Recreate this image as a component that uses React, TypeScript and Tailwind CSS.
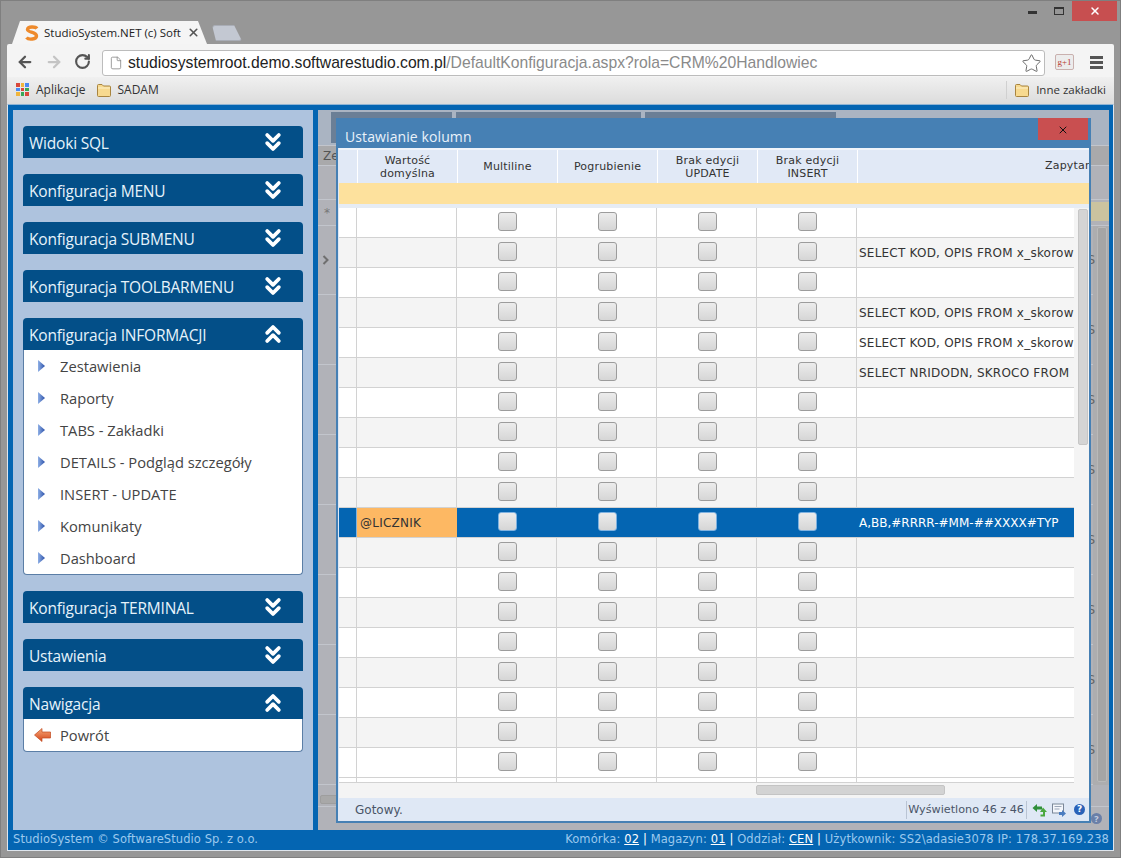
import { ArrowLeft, ArrowRight, RotateCw, Star, File, ChevronsDown, ChevronsUp, X } from 'lucide-react'

const uiFont = "font-['Open_Sans',sans-serif]"
const gridFont = "font-['DejaVu_Sans',sans-serif]"

const ROW_COUNT = 19
const SELECTED_ROW = 10

// query column values by row index
const queries: Record<number, string> = {
  1: 'SELECT KOD, OPIS FROM x_skorow',
  3: 'SELECT KOD, OPIS FROM x_skorow',
  4: 'SELECT KOD, OPIS FROM x_skorow',
  5: 'SELECT NRIDODN, SKROCO FROM',
  10: 'A,BB,#RRRR-#MM-##XXXX#TYP',
}

const infoItems = ['Zestawienia', 'Raporty', 'TABS - Zakładki', 'DETAILS - Podgląd szczegóły', 'INSERT - UPDATE', 'Komunikaty', 'Dashboard']

function FolderIcon() {
  return (
    <svg width="16" height="14" viewBox="0 0 16 14" className="shrink-0">
      <path d="M1.5 12.5V2.5a1 1 0 0 1 1-1h3.5l1.5 1.5h6a1 1 0 0 1 1 1v8.500a1 1 0 0 1-1 1h-11a1 1 0 0 1-1-1z" fill="#f7d98f" stroke="#a8843f" />
      <path d="M2 5h12" stroke="#fdf0c8" />
    </svg>
  )
}

function AppsIcon() {
  const colors = ['#d9483b', '#f0b53c', '#4a8af4', '#4a8af4', '#d9483b', '#3aa757', '#f0b53c', '#3aa757', '#d9483b']
  return (
    <div className="grid grid-cols-3 gap-px w-[13px] h-[13px] shrink-0">
      {colors.map((c, i) => (
        <div key={i} style={{ backgroundColor: c }} />
      ))}
    </div>
  )
}

function Favicon() {
  return (
    <svg width="14" height="16" viewBox="0 0 14 16" className="shrink-0">
      <path d="M12 3.5C10.5 1.5 3 1 2.5 4.5c-.4 3 9 2.500 9 6.500 0 3.500-8 4-10 1.500" fill="none" stroke="#ee8a2c" strokeWidth="3.400" />
    </svg>
  )
}

function MenuHeader({ title, open }: { title: string; open?: boolean }) {
  return (
    <div className="flex items-center justify-between h-8 pl-[6px] pr-[16px] bg-[#034f88] rounded-t-[4px]">
      <span className={`${uiFont} text-[15.500px] tracking-[-0.2px] text-[#e6f3fb] pt-[4px]`}>{title}</span>
      {open ? (
        <ChevronsUp size={28} strokeWidth={3.2} className="text-white" />
      ) : (
        <ChevronsDown size={28} strokeWidth={3.2} className="text-white" />
      )}
    </div>
  )
}

function MenuItem({ label }: { label: string }) {
  return (
    <div className="flex items-center h-8 pl-[14px]">
      <svg width="7" height="12" viewBox="0 0 7 12" className="shrink-0">
        <defs>
          <linearGradient id="tri" x1="0" x2="1">
            <stop offset="0" stopColor="#8fb0e6" />
            <stop offset="1" stopColor="#2a4fa8" />
          </linearGradient>
        </defs>
        <path d="M0 0l7 6-7 6z" fill="url(#tri)" />
      </svg>
      <span className={`${uiFont} text-[14.700px] text-[#444] ml-[15px]`}>{label}</span>
    </div>
  )
}

function Checkbox({ selected }: { selected: boolean }) {
  return (
    <div className={`w-[19px] h-[19px] ml-[2px] mb-[2px] rounded-[3px] border bg-gradient-to-b from-[#ececec] to-[#d6d6d6] ${selected ? 'border-[#7fb2e0]' : 'border-[#9c9c9c]'}`} />
  )
}

function GridRow({ index }: { index: number }) {
  const selected = index === SELECTED_ROW
  const rowBg = selected ? 'bg-[#0465b2]' : index % 2 === 1 ? 'bg-[#f4f4f4]' : 'bg-white'
  const line = selected ? 'border-[#0465b2]' : 'border-[#d2d2d2]'
  return (
    <div className={`flex h-[30px] border-b border-[#d2d2d2] ${rowBg} ${gridFont} text-[12px]`}>
      <div className={`w-[18px] shrink-0 h-full border-r ${selected ? 'border-[#7fb2e0]' : line}`} />
      <div className={`w-[100px] shrink-0 h-full flex items-center pl-[3px] tracking-[0.25px] border-r ${selected ? 'bg-[#fdb863] border-[#fdb863] text-[#333]' : line}`}>
        {selected ? '@LICZNIK' : ''}
      </div>
      {[0, 1, 2, 3].map((c) => (
        <div key={c} className={`w-[100px] shrink-0 h-full flex items-center justify-center border-r ${line}`}>
          <Checkbox selected={selected} />
        </div>
      ))}
      <div className={`flex-1 min-w-0 overflow-hidden whitespace-nowrap h-full flex items-center pl-[2px] ${selected ? 'text-white' : 'text-[#333] tracking-[0.22px]'}`}>
        {queries[index] ?? ''}
      </div>
    </div>
  )
}

function HeaderCell({ lines }: { lines: string[] }) {
  return (
    <div className="w-[100px] shrink-0 flex flex-col items-center justify-center border-r border-white leading-[13px] text-[11px] tracking-[0.2px] text-[#333]">
      {lines.map((l) => (
        <span key={l}>{l}</span>
      ))}
    </div>
  )
}

function BackRow({ first, chevron }: { first?: boolean; chevron?: boolean }) {
  return (
    <div className={`${first ? 'h-[69px]' : 'h-[70px]'} border-b border-[#c2c5cc] flex items-center justify-between pl-[4px] ${gridFont} text-[12px] text-[#666]`}>
      {chevron ? (
        <svg width="8" height="10" viewBox="0 0 8 10">
          <path d="M1.500 1l4 4-4 4" fill="none" stroke="#6f6f6f" strokeWidth="2" />
        </svg>
      ) : (
        <span />
      )}
      <span className="translate-x-[2px]">S</span>
    </div>
  )
}

// what can be seen of the page under the dialog
function BackgroundPanel() {
  return (
    <div className="flex-1 min-w-0 bg-[#b1b2b8] flex flex-col overflow-hidden">
      <div className="flex h-[35px] bg-[#aab4c2] pt-[2px] pb-[2px] pl-[13px] gap-[4px] shrink-0">
        <div className="w-[121px] bg-[#6b7f96]" />
        <div className="w-[185px] bg-[#6b7f96]" />
        <div className="w-[191px] bg-[#6b7f96]" />
      </div>
      <div className={`${gridFont} text-[12px] text-[#555] h-[21px] bg-[#a9a9ab] border-y border-[#c2c5cc] pl-[5px] pt-[1px] shrink-0`}>Ze</div>
      <div className="h-[34px] border-b border-[#c2c5cc] shrink-0" />
      <div className="h-[26px] border-b border-[#c2c5cc] flex justify-between shrink-0">
        <span className={`${gridFont} text-[12px] text-[#777] pl-[6px] pt-[4px]`}>*</span>
        <div className="w-[18px] h-[19px] mt-[2px] bg-[#cbc39f]" />
      </div>
      <div className="flex h-[559px] shrink-0">
        <div className="flex-1 min-w-0">
          {Array.from({ length: 8 }, (_, i) => (
            <BackRow key={i} first={i === 0} chevron={i === 0} />
          ))}
        </div>
        <div className="w-[16px] shrink-0 bg-[#adadaf] pl-[4px] pt-[1px]">
          <div className="w-[10px] h-[555px] bg-[#a5a5a5] border border-[#b9b9b9] rounded-[2px]" />
        </div>
      </div>
      <div className="h-[22px] border-b border-[#c2c5cc] pl-[2px] pt-[10px] shrink-0">
        <div className="w-[40px] h-[9px] bg-[#a8a8a8] border border-[#9e9e9e] rounded-[2px]" />
      </div>
      <div className="flex-1 flex items-center justify-end pr-[7px]">
        <div className="w-[11px] h-[11px] rounded-full bg-[#6a7fa8] text-[#c8d0e0] text-[9px] font-bold leading-[11px] text-center">?</div>
      </div>
    </div>
  )
}

function Dialog() {
  return (
    <div className="absolute left-[335px] top-[117px] w-[755px] h-[705px] border-[2px] border-t-0 border-[#4680b4] bg-[#dfe8f5] flex flex-col">
      <div className="h-[30px] bg-[#4680b4] flex items-start justify-between pl-[7px] shrink-0 relative">
        <span className={`${uiFont} text-[14px] tracking-[0.1px] text-[#eaf2fa] mt-[8px]`}>Ustawianie kolumn</span>
        <div className="absolute right-[1px] top-0 w-[50px] h-[22px] bg-[#c94f50] flex items-center justify-center">
          <X size={12} strokeWidth={2} className="text-[#111] mt-[2px]" />
        </div>
      </div>
      <div className="border-l-[1px] border-[#dfe8f5] flex-1 min-h-0 flex flex-col bg-[#f4f4f4]">
        <div className={`flex h-[35px] bg-[#e1e9f6] border-t-2 border-[#f0f4fa] shrink-0 ${gridFont}`}>
          <div className="w-[19px] shrink-0 border-r border-white" />
          <HeaderCell lines={['Wartość', 'domyślna']} />
          <HeaderCell lines={['Multiline']} />
          <HeaderCell lines={['Pogrubienie']} />
          <HeaderCell lines={['Brak edycji', 'UPDATE']} />
          <HeaderCell lines={['Brak edycji', 'INSERT']} />
          <div className="flex-1 min-w-0 overflow-hidden whitespace-nowrap flex items-center pl-[187px] text-[11px] tracking-[0.2px] text-[#333]">Zapytanie</div>
        </div>
        <div className="h-[21px] bg-[#fde19d] shrink-0" />
        <div className="h-[4px] bg-[#e6ecf4] shrink-0" />
        <div className="flex flex-1 min-h-0">
          <div className="flex-1 min-w-0 overflow-hidden">
            {Array.from({ length: ROW_COUNT }, (_, i) => (
              <GridRow key={i} index={i} />
            ))}
            <div className="flex h-[5px] bg-white border-b border-[#d2d2d2]">
              <div className="w-[18px] border-r border-[#d2d2d2]" />
              <div className="w-[100px] border-r border-[#d2d2d2]" />
              <div className="w-[100px] border-r border-[#d2d2d2]" />
              <div className="w-[100px] border-r border-[#d2d2d2]" />
              <div className="w-[100px] border-r border-[#d2d2d2]" />
              <div className="w-[100px] border-r border-[#d2d2d2]" />
            </div>
            <div className="h-[14px] bg-[#f4f4f4] flex items-center pl-[417px]">
              <div className="w-[189px] h-[10px] bg-[#d3d3d3] rounded-[2px] border border-[#c4c4c4]" />
            </div>
          </div>
          <div className="w-[15px] shrink-0 bg-[#f4f4f4] flex flex-col items-center pt-[1px] pl-[2px]">
            <div className="w-[10px] h-[236px] bg-[#d4d4d4] rounded-[2px] border border-[#c6c6c6]" />
          </div>
        </div>
        <div className={`h-[23px] bg-[#dfe8f5] flex items-center shrink-0 ${gridFont} text-[12px] text-[#4a5568]`}>
          <span className="ml-[16px] flex-1">Gotowy.</span>
          <span className="border-x border-[#b9c4d4] pl-[1px] pr-[2px] h-[18px] leading-[18px] text-[11.200px]">Wyświetlono 46 z 46</span>
          <svg width="15" height="14" viewBox="0 0 15 14" className="ml-[5px]">
            <path d="M0.500 5L5 1V3.500H10V6.500H5V9Z" fill="#2f8f3a" />
            <path d="M11 4.500L15 9H13V13.500H8.500V11.500H11V9H8Z" fill="#4aa83f" />
          </svg>
          <svg width="14" height="14" viewBox="0 0 14 14" className="ml-[5px]">
            <rect x="0.500" y="1" width="11" height="9" fill="#f3f6fb" stroke="#7b8798" />
            <path d="M2.500 3.500h7M2.500 6h5" stroke="#9aa6b8" />
            <path d="M7 9h3V7l4 3.500-4 3.500v-2H7z" fill="#4a7cc0" />
          </svg>
          <div className="w-[11px] h-[11px] ml-[8px] mr-[4px] rounded-full bg-[#2a62b8] text-white text-[9px] font-bold leading-[11px] text-center">?</div>
        </div>
      </div>
    </div>
  )
}

export default function App() {
  return (
    <div className="relative w-[1121px] h-[858px] overflow-hidden bg-[#979797] border border-[#7f7f7f] flex flex-col px-[6px] pb-[6px]">
      {/* window buttons */}
      <div className="absolute right-[3px] top-0 flex items-start">
        <div className="w-[9px] h-[3px] bg-[#333] mr-[17px] mt-[10px]" />
        <div className="w-[10px] h-[8px] border border-t-2 border-[#333] mr-[8px] mt-[6px]" />
        <div className="w-[45px] h-[20px] bg-[#c74f50] flex items-center justify-center">
          <X size={12} strokeWidth={3} className="text-white" />
        </div>
      </div>

      {/* tabs */}
      <div className="h-[43px] flex items-end pl-[5px] shrink-0">
        <div className="w-[195px] h-[23px] bg-[#f5f5f5] rounded-t-[5px] [clip-path:polygon(0_100%,8px_0,186px_0,100%_100%)] flex items-center pl-[13px]">
          <Favicon />
          <span className={`${uiFont} text-[11.500px] text-[#222] ml-[5px] w-[137px] overflow-hidden whitespace-nowrap`}>StudioSystem.NET (c) Soft</span>
          <X size={13} strokeWidth={3} className="text-[#555] ml-[6px]" />
        </div>
        <div className="w-[30px] h-[16px] bg-[#c3c8d2] rounded-[3px] ml-[5px] mb-[3px] border border-[#a9adb6] [clip-path:polygon(0_0,22px_0,100%_100%,4px_100%)]" />
      </div>

      {/* toolbar */}
      <div className="h-[33px] bg-[#f4f4f4] rounded-t-[2px] flex items-start pt-[6px] pl-[9px] shrink-0">
        <ArrowLeft size={18} strokeWidth={3} className="text-[#555] mt-[3px]" />
        <ArrowRight size={18} strokeWidth={3} className="text-[#c4c4c4] ml-[11px] mt-[3px]" />
        <RotateCw size={17} strokeWidth={3} className="text-[#555] ml-[11px] mt-[3px]" />
        <div className="ml-[11px] w-[943px] h-[26px] bg-white rounded-[3px] border border-[#bcbcbc] flex items-center pl-[6px] pr-[2px]">
          <File size={14} strokeWidth={1.4} className="text-[#888] shrink-0" />
          <span className="font-['Liberation_Sans',sans-serif] text-[15.700px] ml-[5px] flex-1 whitespace-nowrap overflow-hidden">
            <span className="text-[#222]">studiosystemroot.demo.softwarestudio.com.pl</span>
            <span className="text-[#8a8a8a]">/DefaultKonfiguracja.aspx?rola=CRM%20Handlowiec</span>
          </span>
          <Star size={21} strokeWidth={1.1} className="text-[#666]" />
        </div>
        <div className="ml-[10px] mt-[4px] w-[19px] h-[16px] bg-[#ececec] border border-[#c9b0ae] rounded-[2px] text-[9px] leading-[14px] text-center text-[#b73a2e] font-['Liberation_Serif',serif] shrink-0">g+1</div>
        <div className="ml-[16px] mt-[6px] w-[13px] flex flex-col gap-[2px] shrink-0">
          <div className="h-[3px] bg-[#555]" />
          <div className="h-[3px] bg-[#555]" />
          <div className="h-[3px] bg-[#555]" />
        </div>
      </div>

      {/* bookmarks */}
      <div className={`h-[27px] pb-[2px] bg-gradient-to-b from-[#f0f0f0] to-[#dcdcdc] flex items-center pl-[9px] pr-[8px] text-[12px] text-[#333] shrink-0 ${uiFont}`}>
        <AppsIcon />
        <span className="ml-[7px]">Aplikacje</span>
        <div className="ml-[11px]"><FolderIcon /></div>
        <span className="ml-[5px]">SADAM</span>
        <div className="ml-auto h-[18px] border-l border-[#d0d0d0] mr-[7px]" />
        <FolderIcon />
        <span className="ml-[6px] text-[11.500px]">Inne zakładki</span>
      </div>

      {/* page */}
      <div className="flex-1 min-h-0 flex flex-col bg-[#0465b2] border-t border-[#8fb4d4] border-x border-x-[#dfe6ee] border-b border-b-[#dfe6ee]">
        <div className="flex-1 min-h-0 flex gap-[5px] pt-[5px] pl-[5px] pr-[4px]">
          <div className="w-[300px] shrink-0 bg-[#aec3de] flex flex-col gap-4 pt-4 px-[10px]">
            <MenuHeader title="Widoki SQL" />
            <MenuHeader title="Konfiguracja MENU" />
            <MenuHeader title="Konfiguracja SUBMENU" />
            <MenuHeader title="Konfiguracja TOOLBARMENU" />
            <div>
              <MenuHeader title="Konfiguracja INFORMACJI" open />
              <div className="bg-white rounded-b-[4px] border border-t-0 border-[#5b7ea6] h-[225px]">
                {infoItems.map((l) => (
                  <MenuItem key={l} label={l} />
                ))}
              </div>
            </div>
            <MenuHeader title="Konfiguracja TERMINAL" />
            <MenuHeader title="Ustawienia" />
            <div>
              <MenuHeader title="Nawigacja" open />
              <div className="bg-white rounded-b-[4px] border border-t-0 border-[#5b7ea6] h-[33px] flex items-center pl-[10px]">
                <svg width="17" height="14" viewBox="0 0 17 14" className="shrink-0">
                  <defs>
                    <linearGradient id="back" x1="0" x2="0" y1="0" y2="1">
                      <stop offset="0" stopColor="#f7a878" />
                      <stop offset="1" stopColor="#d3461a" />
                    </linearGradient>
                  </defs>
                  <path d="M0.500 7L8 0.500V4h8.500v6H8v3.500z" fill="url(#back)" stroke="#c2491e" strokeWidth="0.700" />
                </svg>
                <span className={`${uiFont} text-[14.700px] text-[#444] ml-[9px]`}>Powrót</span>
              </div>
            </div>
          </div>
          <BackgroundPanel />
        </div>
        <div className={`h-[20px] shrink-0 flex items-center justify-between pl-[5px] pr-[4px] text-[11.500px] text-[#9cc9ee] ${gridFont}`}>
          <span className="tracking-[0.08px]">StudioSystem © SoftwareStudio Sp. z o.o.</span>
          <span className="tracking-[0.12px]">
            Komórka: <u className="text-white">02</u> <span className="text-white">|</span> Magazyn: <u className="text-white">01</u> <span className="text-white">|</span> Oddział: <u className="text-white">CEN</u> <span className="text-white">|</span> Użytkownik: SS2\adasie3078 IP: 178.37.169.238
          </span>
        </div>
      </div>

      <Dialog />
    </div>
  )
}
